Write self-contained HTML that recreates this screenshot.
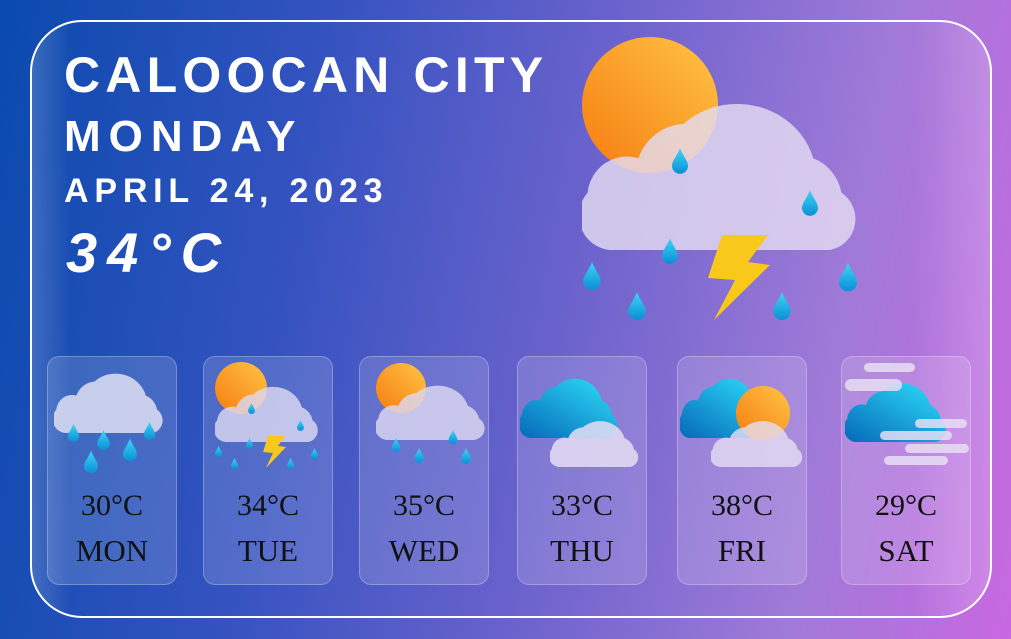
<!DOCTYPE html>
<html><head><meta charset="utf-8"><style>
body{margin:0;width:1011px;height:639px;overflow:hidden;background:linear-gradient(100deg,#0a4aae 0%,#3553c0 30%,#6a62cc 55%,#a07ad8 80%,#c868e2 100%);position:relative;font-family:"Liberation Sans",sans-serif}
.frame{position:absolute;left:30px;top:20px;width:958px;height:594px;border:2px solid #fff;border-radius:52px;background:linear-gradient(90deg,rgba(255,255,255,.18),rgba(255,255,255,0) 4%,rgba(255,255,255,0) 92%,rgba(255,255,255,.2))}
.t{position:absolute;color:#fff;font-weight:bold;white-space:nowrap}
.card{position:absolute;top:356px;width:130px;height:229px;border-radius:12px;background:rgba(255,255,255,.15);border:1px solid rgba(255,255,255,.25);box-sizing:border-box}
.card div{position:absolute;left:0;right:0;text-align:center;font-family:"Liberation Serif",serif;color:#111}
.tp{top:132px;font-size:30px}.dy{top:176px;font-size:31px}
svg{position:absolute;left:0;top:0}
</style></head><body>
<div class="frame"></div>
<div class="t" style="left:64px;top:46px;font-size:50px;letter-spacing:5.2px">CALOOCAN CITY</div>
<div class="t" style="left:64px;top:112px;font-size:44px;letter-spacing:8px">MONDAY</div>
<div class="t" style="left:64px;top:172px;font-size:34px;letter-spacing:5.8px">APRIL 24, 2023</div>
<div class="t" style="left:66px;top:220px;font-size:56px;font-style:italic;letter-spacing:10px">34°C</div>
<div class="card" style="left:47px"><div class="tp">30°C</div><div class="dy">MON</div></div>
<div class="card" style="left:203px"><div class="tp">34°C</div><div class="dy">TUE</div></div>
<div class="card" style="left:359px"><div class="tp">35°C</div><div class="dy">WED</div></div>
<div class="card" style="left:517px"><div class="tp">33°C</div><div class="dy">THU</div></div>
<div class="card" style="left:677px"><div class="tp">38°C</div><div class="dy">FRI</div></div>
<div class="card" style="left:841px"><div class="tp">29°C</div><div class="dy">SAT</div></div>
<svg width="1011" height="639" viewBox="0 0 1011 639">
<defs>
<symbol id="c" viewBox="0 0 100 60" preserveAspectRatio="none"><path d="M12,60 A12,12 0 0 1 2,40 A14,14 0 0 1 20,28 A18,18 0 0 1 36,16 A28,26 0 0 1 82,28 A16,16 0 0 1 92,40 A11,11 0 0 1 88,60 Z"/></symbol>
<symbol id="d" viewBox="0 0 10 16"><path d="M5,0 C7,5 10,8 10,11 A5,5 0 0 1 0,11 C0,8 3,5 5,0Z"/></symbol>
<linearGradient id="sun" x1="1" y1="0" x2="0" y2="1"><stop offset="0" stop-color="#ffc545"/><stop offset="1" stop-color="#f77c10"/></linearGradient>
<linearGradient id="bl" x1="1" y1="0" x2="0" y2="1"><stop offset="0" stop-color="#2fe0fb"/><stop offset="1" stop-color="#0568b8"/></linearGradient>
<linearGradient id="dr" x1="0" y1="0" x2="0" y2="1"><stop offset="0" stop-color="#3ed4f5"/><stop offset="1" stop-color="#0b8fd6"/></linearGradient>
</defs>
<circle cx="650" cy="105" r="68" fill="url(#sun)"/>
<use href="#c" x="582" y="78" width="282" height="172" fill="#e4dcf2" fill-opacity=".82"/>
<g fill="url(#dr)">
<use href="#d" x="672" y="148" width="16" height="26"/><use href="#d" x="802" y="190" width="16" height="26"/>
<use href="#d" x="583" y="262" width="18" height="28"/><use href="#d" x="628" y="292" width="18" height="28"/>
<use href="#d" x="662" y="238" width="16" height="26"/><use href="#d" x="773" y="292" width="18" height="28"/><use href="#d" x="839" y="262" width="18" height="30"/>
</g>
<path d="M722,235 L768,235 L748,262 L770,265 L714,320 L735,280 L708,278 Z" fill="#f8c81a"/>
<use href="#c" x="54" y="363" width="112" height="70" fill="#d6d9f0" fill-opacity=".9"/>
<g fill="url(#dr)"><use href="#d" x="67" y="424" width="13" height="18"/><use href="#d" x="97" y="430" width="13" height="20"/><use href="#d" x="123" y="438" width="14" height="24"/><use href="#d" x="84" y="450" width="14" height="24"/><use href="#d" x="143" y="422" width="13" height="18"/></g>
<circle cx="241" cy="388" r="26" fill="url(#sun)"/>
<use href="#c" x="215" y="377" width="106" height="65" fill="#dcd8f2" fill-opacity=".82"/>
<g fill="url(#dr)"><use href="#d" x="248" y="403" width="7" height="11"/><use href="#d" x="297" y="420" width="7" height="11"/><use href="#d" x="215" y="446" width="7" height="11"/><use href="#d" x="231" y="458" width="7" height="11"/><use href="#d" x="246" y="438" width="7" height="11"/><use href="#d" x="287" y="458" width="7" height="11"/><use href="#d" x="311" y="448" width="7" height="11"/></g>
<path d="M268,436 L285,436 L278,446 L286,447 L266,468 L273,453 L263,452 Z" fill="#f8c81a"/>
<circle cx="401" cy="388" r="25" fill="url(#sun)"/>
<use href="#c" x="376" y="376" width="112" height="64" fill="#dcd8f2" fill-opacity=".82"/>
<g fill="url(#dr)"><use href="#d" x="391" y="438" width="10" height="14"/><use href="#d" x="414" y="448" width="10" height="15"/><use href="#d" x="448" y="430" width="10" height="14"/><use href="#d" x="461" y="448" width="10" height="16"/></g>
<use href="#c" x="520" y="368" width="100" height="70" fill="url(#bl)"/>
<use href="#c" x="550" y="413" width="91" height="54" fill="#e6def4" fill-opacity=".85"/>
<use href="#c" x="680" y="368" width="90" height="70" fill="url(#bl)"/>
<circle cx="763" cy="413" r="27" fill="url(#sun)"/>
<use href="#c" x="711" y="413" width="94" height="54" fill="#e6def4" fill-opacity=".8"/>
<use href="#c" x="845" y="373" width="104" height="69" fill="url(#bl)"/>
<g fill="#e8def4" fill-opacity=".85"><rect x="864" y="363" width="51" height="9" rx="4.5"/><rect x="845" y="379" width="57" height="12" rx="6"/><rect x="915" y="419" width="52" height="9" rx="4.5"/><rect x="880" y="431" width="72" height="9" rx="4.5"/><rect x="905" y="444" width="64" height="9" rx="4.5"/><rect x="884" y="456" width="64" height="9" rx="4.5"/></g>
</svg>
</body></html>
